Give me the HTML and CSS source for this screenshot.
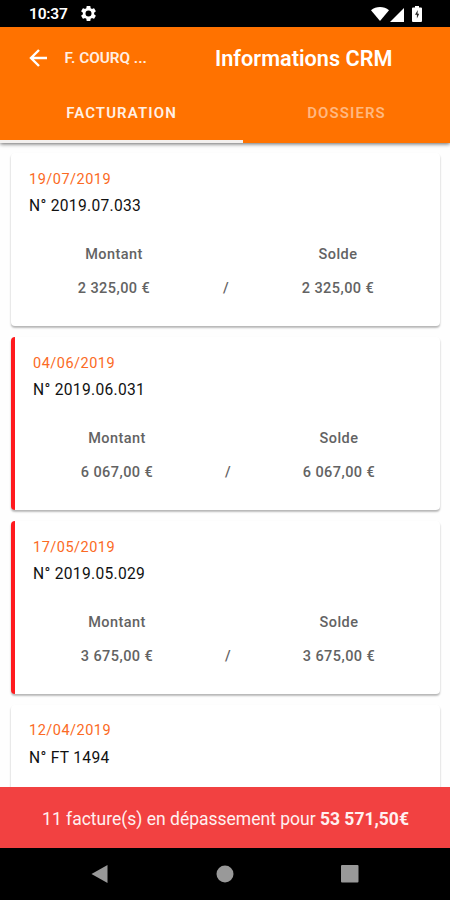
FILE: index.html
```html
<!DOCTYPE html>
<html lang="fr">
<head>
    <meta charset="UTF-8">
    <meta name="viewport" content="width=device-width, initial-scale=1.0">
    <title>Informations CRM</title>
    <link rel="stylesheet" href="styles.css">
</head>
<body>
    <div class="status-bar">
        <span class="clock">10:37</span>
        <svg class="gear" viewBox="2 2 20 20" width="15" height="15"><path fill="#fff" fill-rule="evenodd" d="M19.43 12.98c.04-.32.07-.64.07-.98s-.03-.66-.07-.98l2.11-1.65c.19-.15.24-.42.12-.64l-2-3.46c-.12-.22-.39-.3-.61-.22l-2.49 1c-.52-.4-1.08-.73-1.69-.98l-.38-2.65C14.46 2.18 14.25 2 14 2h-4c-.25 0-.46.18-.49.42l-.38 2.65c-.61.25-1.17.59-1.69.98l-2.49-1c-.23-.09-.49 0-.61.22l-2 3.46c-.13.22-.07.49.12.64l2.11 1.65c-.04.32-.07.65-.07.98s.03.66.07.98l-2.11 1.65c-.19.15-.24.42-.12.64l2 3.46c.12.22.39.3.61.22l2.49-1c.52.4 1.08.73 1.69.98l.38 2.65c.03.24.24.42.49.42h4c.25 0 .46-.18.49-.42l.38-2.65c.61-.25 1.17-.59 1.69-.98l2.49 1c.23.09.49 0 .61-.22l2-3.46c.12-.22.07-.49-.12-.64l-2.11-1.65zM12 16a4 4 0 1 1 0-8 4 4 0 0 1 0 8z"/></svg>
        <div class="status-icons">
            <svg width="18" height="14" viewBox="0 0 18 14"><path fill="#fff" d="M0 3.2C5-1 13-1 18 3.2L9 14z"/></svg>
            <svg class="signal" width="14" height="14" viewBox="0 0 14 14"><path fill="#fff" d="M14 0v14H0z"/></svg>
            <svg class="battery" width="10" height="16" viewBox="0 0 10 16"><path fill="#fff" d="M3 0h4v1.5h2q1 0 1 1V15q0 1-1 1H1q-1 0-1-1V2.500q0-1 1-1h2z"/><path fill="#222" d="M5.800 4L3 8.800h1.900v3.700L7.200 7.800H5.500z"/></svg>
        </div>
    </div>

    <header class="app-bar">
        <div class="toolbar">
            <svg class="back" width="18" height="18" viewBox="0 0 18 18"><path fill="none" stroke="#fff" stroke-width="2.400" d="M18 9H2M10 1L2 9l8 8"/></svg>
            <span class="back-label">F. COURQ ...</span>
            <h1>Informations CRM</h1>
        </div>
        <nav class="tabs">
            <a class="tab active">FACTURATION</a>
            <a class="tab">DOSSIERS</a>
        </nav>
    </header>

    <main class="list">
        <div class="card">
            <div class="date">19/07/2019</div>
            <div class="number">N° 2019.07.033</div>
            <div class="amounts">
                <div class="amount"><span>Montant</span><span>2 325,00 €</span></div>
                <div class="slash">/</div>
                <div class="amount"><span>Solde</span><span>2 325,00 €</span></div>
            </div>
        </div>
        <div class="card late">
            <div class="date">04/06/2019</div>
            <div class="number">N° 2019.06.031</div>
            <div class="amounts">
                <div class="amount"><span>Montant</span><span>6 067,00 €</span></div>
                <div class="slash">/</div>
                <div class="amount"><span>Solde</span><span>6 067,00 €</span></div>
            </div>
        </div>
        <div class="card late">
            <div class="date">17/05/2019</div>
            <div class="number">N° 2019.05.029</div>
            <div class="amounts">
                <div class="amount"><span>Montant</span><span>3 675,00 €</span></div>
                <div class="slash">/</div>
                <div class="amount"><span>Solde</span><span>3 675,00 €</span></div>
            </div>
        </div>
        <div class="card">
            <div class="date">12/04/2019</div>
            <div class="number">N° FT 1494</div>
        </div>
    </main>

    <footer class="summary"><span>11 facture(s) en dépassement pour <b>53 571,50€</b></span></footer>

    <div class="nav-bar">
        <svg width="18" height="18" viewBox="0 0 18 18"><path fill="#999" d="M16.500 0v18L.5 9z"/></svg>
        <svg width="18" height="18" viewBox="0 0 18 18"><circle cx="9" cy="9" r="8.500" fill="#999"/></svg>
        <svg width="18" height="18" viewBox="0 0 18 18"><rect width="17.500" height="17.500" rx="1" fill="#999"/></svg>
    </div>
</body>
</html>
```

FILE: styles.css
```css
* {
    box-sizing: border-box;
}

body {
    margin: 0;
    width: 450px;
    height: 900px;
    overflow: hidden;
    display: flex;
    flex-direction: column;
    font-family: Roboto, "Liberation Sans", sans-serif;
    background: #fefefe;
}

svg {
    display: block;
    flex: none;
}

.status-bar {
    flex: 0 0 27px;
    display: flex;
    align-items: center;
    padding: 1px 28px 0 29px;
    background: #000;
    color: #fff;
}

.clock {
    width: 52px;
    font-size: 15.5px;
    font-weight: 600;
    letter-spacing: -0.2px;
}

.gear {
    margin-bottom: 1px;
}

.status-icons {
    display: flex;
    align-items: center;
    margin-left: auto;
    gap: 1px;
}

.signal {
    margin-top: 1px;
}

.battery {
    margin-left: 7px;
}

.app-bar {
    flex: 0 0 116px;
    background: #ff7200;
    color: #fff;
    box-shadow: 0 1px 4px rgba(0, 0, 0, 0.6);
    z-index: 1;
}

.toolbar {
    display: flex;
    align-items: center;
    height: 62px;
    padding-left: 28.5px;
}

.back-label {
    width: 150.5px;
    margin-left: 18px;
    font-size: 15.3px;
    font-weight: 600;
    color: #fff0e5;
}

h1 {
    margin: 0;
    font-size: 21.7px;
    font-weight: 600;
    white-space: nowrap;
}

.tabs {
    display: flex;
    height: 54px;
}

.tab {
    display: flex;
    align-items: center;
    justify-content: center;
    width: 207px;
    padding-bottom: 6px;
    font-size: 15px;
    font-weight: 600;
    letter-spacing: 1.1px;
    color: #ffb880;
}

.tab.active {
    width: 243px;
    padding-bottom: 3px;
    color: #fff0e5;
    border-bottom: 3px solid #f3f0ee;
}

.list {
    flex: 1;
    min-height: 0;
    overflow: hidden;
    display: flex;
    flex-direction: column;
    gap: 11px;
    padding: 10.4px 10px 0 11px;
}

.card {
    flex: 0 0 172.8px;
    padding: 17.6px 17px 0 18px;
    border-radius: 4px;
    background: #fff;
    box-shadow: 0 2px 2px rgba(0, 0, 0, 0.24), 0 1px 2px rgba(0, 0, 0, 0.08);
}

.card.late {
    border-left: 4px solid #ff1a1e;
}

.date {
    font-size: 14.5px;
    line-height: 18px;
    letter-spacing: 0.5px;
    color: #fb6a24;
}

.number {
    margin-top: 7.4px;
    font-size: 15.6px;
    line-height: 20px;
    letter-spacing: 0.3px;
    color: #111;
}

.amounts {
    display: flex;
    align-items: flex-end;
    margin-top: 29.6px;
    font-size: 14.5px;
    font-weight: 500;
    line-height: 18px;
    letter-spacing: 0.45px;
    color: #636363;
}

.amount {
    flex: 1;
    display: flex;
    flex-direction: column;
    align-items: center;
    gap: 16.2px;
}

.slash {
    width: 54px;
    text-align: center;
}

.summary {
    flex: 0 0 61px;
    display: flex;
    align-items: center;
    justify-content: center;
    padding: 2px 0 0 1px;
    background: #f24141;
    color: #fff0f0;
    font-size: 17.5px;
    white-space: nowrap;
    z-index: 1;
}

.nav-bar {
    flex: 0 0 52px;
    display: flex;
    align-items: center;
    justify-content: space-between;
    padding: 0 91px;
    background: #000;
}
```
